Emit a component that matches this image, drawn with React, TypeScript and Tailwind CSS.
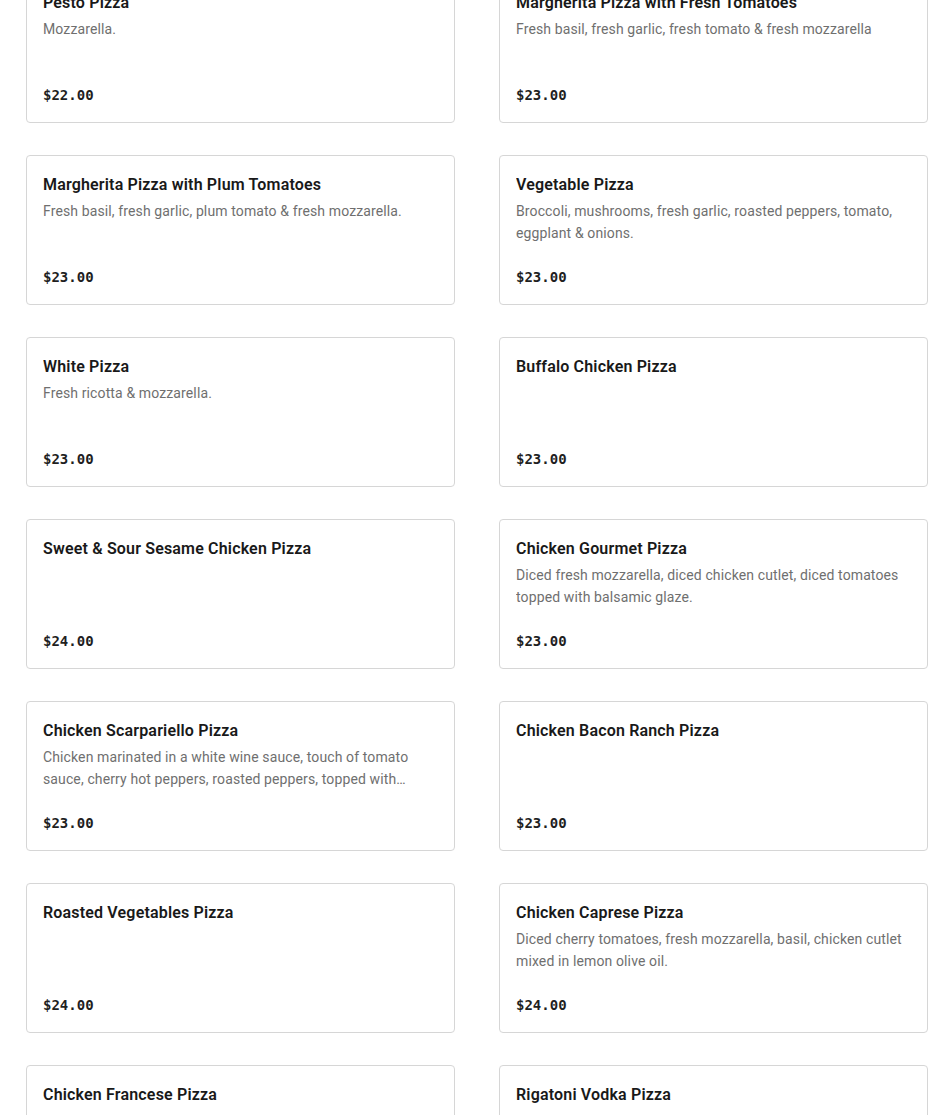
import React from "react";

type Item = { name: string; desc?: string; price: string };

const items: Item[] = [
  { name: "Pesto Pizza", desc: "Mozzarella.", price: "$22.00" },
  { name: "Margherita Pizza with Fresh Tomatoes", desc: "Fresh basil, fresh garlic, fresh tomato & fresh mozzarella", price: "$23.00" },
  { name: "Margherita Pizza with Plum Tomatoes", desc: "Fresh basil, fresh garlic, plum tomato & fresh mozzarella.", price: "$23.00" },
  { name: "Vegetable Pizza", desc: "Broccoli, mushrooms, fresh garlic, roasted peppers, tomato, eggplant & onions.", price: "$23.00" },
  { name: "White Pizza", desc: "Fresh ricotta & mozzarella.", price: "$23.00" },
  { name: "Buffalo Chicken Pizza", price: "$23.00" },
  { name: "Sweet & Sour Sesame Chicken Pizza", price: "$24.00" },
  { name: "Chicken Gourmet Pizza", desc: "Diced fresh mozzarella, diced chicken cutlet, diced tomatoes topped with balsamic glaze.", price: "$23.00" },
  { name: "Chicken Scarpariello Pizza", desc: "Chicken marinated in a white wine sauce, touch of tomato sauce, cherry hot peppers, roasted peppers, topped with…", price: "$23.00" },
  { name: "Chicken Bacon Ranch Pizza", price: "$23.00" },
  { name: "Roasted Vegetables Pizza", price: "$24.00" },
  { name: "Chicken Caprese Pizza", desc: "Diced cherry tomatoes, fresh mozzarella, basil, chicken cutlet mixed in lemon olive oil.", price: "$24.00" },
  { name: "Chicken Francese Pizza", desc: "Chicken francese, lemon sauce and mozzarella.", price: "$24.00" },
  { name: "Rigatoni Vodka Pizza", desc: "Rigatoni in vodka sauce with mozzarella.", price: "$24.00" },
];

function Card({ item }: { item: Item }) {
  return (
    <div className="h-[150px] rounded-[4px] border border-[#d6d6d6] bg-white pl-[16px] pr-[15px] pt-[17px] pb-4 flex flex-col">
      <div className="text-[16px] leading-[24px] font-semibold tracking-[0.17px] text-[#191919] truncate" style={{ fontFamily: '"Roboto", "Noto Sans", sans-serif' }}>
        {item.name}
      </div>
      {item.desc && (
        <div className="mt-[3px] text-[14px] leading-[22px] tracking-[0.12px] text-[#6f6f6f] line-clamp-2" style={{ fontFamily: '"Roboto", "Noto Sans", sans-serif' }}>
          {item.desc}
        </div>
      )}
      <div className="mt-auto text-[14px] leading-[22px] font-bold text-[#1f1f1f]" style={{ fontFamily: '"DejaVu Sans Mono", "Liberation Mono", monospace' }}>
        {item.price}
      </div>
    </div>
  );
}

export default function App() {
  return (
    <div className="w-[950px] h-[1115px] overflow-hidden bg-white">
      <div className="mt-[-27px] pl-[26px] grid grid-cols-[429px_429px] gap-x-[44px] gap-y-[32px]">
        {items.map((it) => (
          <Card key={it.name} item={it} />
        ))}
      </div>
    </div>
  );
}
